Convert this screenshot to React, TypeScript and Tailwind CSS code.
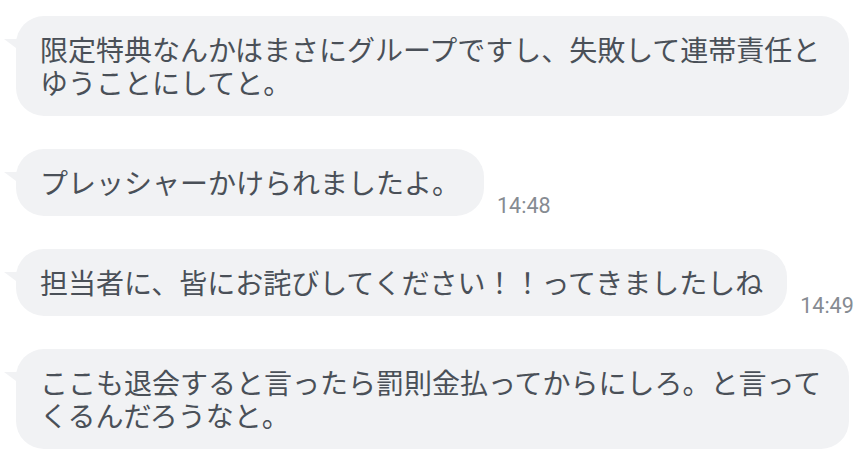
const messages: { id: number; text: string; time?: string }[] = [
  { id: 1, text: "限定特典なんかはまさにグループですし、失敗して連帯責任とゆうことにしてと。" },
  { id: 2, text: "プレッシャーかけられましたよ。", time: "14:48" },
  { id: 3, text: "担当者に、皆にお詫びしてください！！ってきましたしね", time: "14:49" },
  { id: 4, text: "ここも退会すると言ったら罰則金払ってからにしろ。と言ってくるんだろうなと。" },
];

function Bubble({ text }: { text: string }) {
  return (
    <div className="relative max-w-[833px] rounded-[28px] bg-[#f1f2f4] px-6 py-[17px]">
      {/* tail */}
      <svg
        className="absolute left-[-12px] top-[23px]"
        width="16"
        height="12"
        viewBox="0 0 16 12"
      >
        <polygon points="0,0 16,0 16,12" fill="#f1f2f4" />
      </svg>
      <p className="text-[28px] leading-[33px] text-[#4a5058] [font-family:'Noto_Sans_CJK_JP',sans-serif]">
        {text}
      </p>
    </div>
  );
}

export default function App() {
  return (
    <div className="min-h-[468px] w-[860px] bg-white pl-4 pt-4">
      <div className="flex flex-col gap-[33px]">
        {messages.map((m) => (
          <div key={m.id} className="flex items-end">
            <Bubble text={m.text} />
            {m.time && (
              <span className="ml-[13px] shrink-0 text-[21.5px] leading-none text-[#868b92] [font-family:Roboto,sans-serif]">
                {m.time}
              </span>
            )}
          </div>
        ))}
      </div>
    </div>
  );
}
